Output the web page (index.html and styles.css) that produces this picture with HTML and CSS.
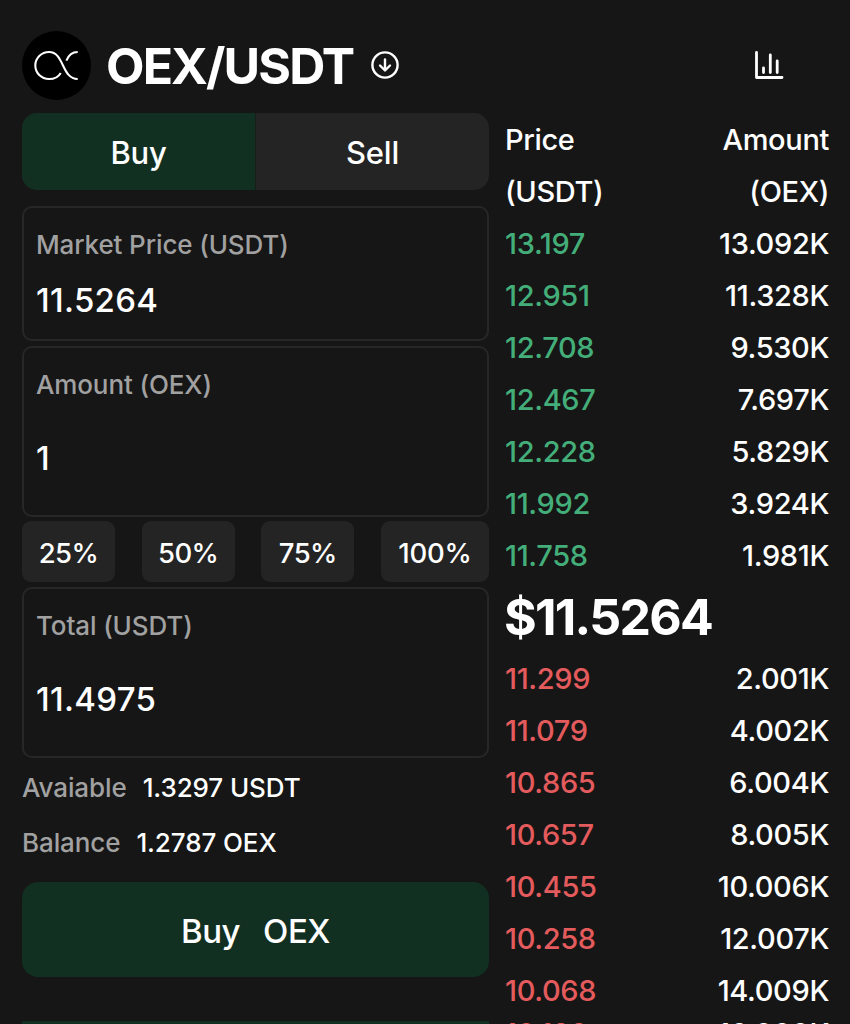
FILE: index.html
```html
<!DOCTYPE html>
<html lang="en">
<head>
<meta charset="utf-8">
<title>OEX/USDT</title>
<link rel="stylesheet" href="styles.css">
</head>
<body>
<header class="header">
  <svg class="logo" viewBox="0 0 70 70"><circle cx="35" cy="35" r="35" fill="#000"/><g fill="none" stroke="#fff" stroke-width="2.1"><path d="M39.3 42.5C37 46.500 32.500 48.700 27.500 48.700C19.500 48.700 13.500 42.500 13.500 35C13.500 27.500 19.500 21.300 27.500 21.300C43 21.300 40 48.700 56.500 48.700"/><path d="M45 30C47.300 24.300 51 21.300 56.500 21.300"/></g></svg>
  <h1 class="pair">OEX/USDT</h1>
  <svg class="arrow" viewBox="0 0 28 28" fill="none" stroke="#fff" stroke-width="2.400" stroke-linecap="round" stroke-linejoin="round"><circle cx="14" cy="14" r="12.600"/><path d="M14 8.500v10.500M9 14.500l5 5 5-5"/></svg>
  <svg class="chart" viewBox="0 0 30 30" fill="none" stroke="#fff" stroke-width="2.800" stroke-linecap="round" stroke-linejoin="round"><path d="M2.500 2.500V27.500H28"/><path d="M9.500 18V22.500M16.300 5V22.500M23.200 11V22.500"/></svg>
</header>
<main class="main">
  <section class="form">
    <div class="tabs"><div class="tab active">Buy</div><div class="tab">Sell</div></div>
    <div class="field price"><div class="label">Market Price (USDT)</div><div class="value">11.5264</div></div>
    <div class="field"><div class="label">Amount (OEX)</div><div class="value">1</div></div>
    <div class="percents"><div class="pct">25%</div><div class="pct">50%</div><div class="pct">75%</div><div class="pct wide">100%</div></div>
    <div class="field"><div class="label">Total (USDT)</div><div class="value">11.4975</div></div>
    <div class="info"><span class="key">Avaiable</span><span class="available">1.3297 USDT</span></div>
    <div class="info"><span class="key">Balance</span><span class="balance">1.2787 OEX</span></div>
    <div class="submit"><span>Buy</span><span>OEX</span></div>
    <div class="next"></div>
  </section>
  <section class="book">
    <div class="row first"><span>Price</span><span>Amount</span></div>
    <div class="row"><span>(USDT)</span><span>(OEX)</span></div>
    <div class="row up"><span>13.197</span><span>13.092K</span></div>
    <div class="row up"><span>12.951</span><span>11.328K</span></div>
    <div class="row up"><span>12.708</span><span>9.530K</span></div>
    <div class="row up"><span>12.467</span><span>7.697K</span></div>
    <div class="row up"><span>12.228</span><span>5.829K</span></div>
    <div class="row up"><span>11.992</span><span>3.924K</span></div>
    <div class="row up"><span>11.758</span><span>1.981K</span></div>
    <div class="last">$11.5264</div>
    <div class="row down"><span>11.299</span><span>2.001K</span></div>
    <div class="row down"><span>11.079</span><span>4.002K</span></div>
    <div class="row down"><span>10.865</span><span>6.004K</span></div>
    <div class="row down"><span>10.657</span><span>8.005K</span></div>
    <div class="row down"><span>10.455</span><span>10.006K</span></div>
    <div class="row down"><span>10.258</span><span>12.007K</span></div>
    <div class="row down"><span>10.068</span><span>14.009K</span></div>
    <div class="row down partial"><span>10.188</span><span>16.000K</span></div>
  </section>
</main>
</body>
</html>
```

FILE: styles.css
```css
* { box-sizing: border-box; }
body { margin: 0; width: 850px; height: 1024px; overflow: hidden; background: #161616; color: #fff; font-family: Inter, sans-serif; font-weight: 500; }
.header { height: 113px; padding: 17px 66px 0 22px; display: flex; align-items: center; }
.logo { width: 69px; height: 69px; }
.pair { margin: 1px 0 0 15px; font-size: 50px; line-height: 60px; font-weight: 700; letter-spacing: -1.9px; width: 247px; white-space: nowrap; }
.arrow { width: 28px; height: 28px; margin-left: 18px; }
.chart { width: 30px; height: 30px; margin-left: auto; }
.main { display: flex; height: 911px; padding: 0 21px 0 22px; gap: 16px; }
.form { width: 467px; display: flex; flex-direction: column; }
.tabs { display: flex; height: 77px; margin-bottom: 16px; border-radius: 15px; overflow: hidden; background: #242424; font-size: 31px; letter-spacing: -0.2px; }
.tab { flex: 1; display: flex; align-items: center; justify-content: center; padding-top: 3px; }
.active { background: #123022; border-right: 1px solid #181d1a; }
.field { height: 171px; flex: none; border: 2px solid #272727; border-radius: 10px; padding: 20px 12px 0; margin-bottom: 5px; }
.label { font-size: 26px; line-height: 34px; color: #a1a1a1; letter-spacing: -0.12px; }
.value { font-size: 33px; line-height: 40px; margin-top: 36px; letter-spacing: 0.3px; }
.price { height: 135px; }
.price .value { margin-top: 18px; }
.field:nth-child(3) { margin-bottom: 4px; }
.percents { display: flex; justify-content: space-between; margin-bottom: 5px; font-size: 27.5px; letter-spacing: -0.6px; }
.pct { width: 93px; height: 61px; border-radius: 9px; background: #242424; display: flex; align-items: center; justify-content: center; padding-top: 4px; }
.wide { width: 108px; letter-spacing: -0.2px; }
.info { height: 55px; display: flex; align-items: center; gap: 16px; font-size: 26px; letter-spacing: -0.1px; padding-bottom: 4px; }
.key { color: #a1a1a1; }
.submit { flex: none; height: 95px; margin-top: 10px; border-radius: 16px; background: #123022; display: flex; align-items: center; justify-content: center; gap: 23px; font-size: 33px; letter-spacing: -0.5px; padding-top: 2px; }
.next { flex: none; height: 3px; margin-top: 44px; background: #123022; }
.book { flex: 1; display: flex; flex-direction: column; font-size: 29px; letter-spacing: -0.35px; }
.row { height: 52px; flex: none; display: flex; align-items: center; justify-content: space-between; padding-bottom: 1px; }
.first { margin-top: 1px; }
.up span:first-child { color: #44ae7a; }
.down span:first-child { color: #e45b5d; }
.last { height: 71px; flex: none; line-height: 70px; font-size: 50px; font-weight: 700; letter-spacing: -1.75px; margin-left: -1px; }
.partial { height: 35px; margin-top: -2px; padding: 7px 0 0; line-height: 24px; align-items: flex-start; }
```
